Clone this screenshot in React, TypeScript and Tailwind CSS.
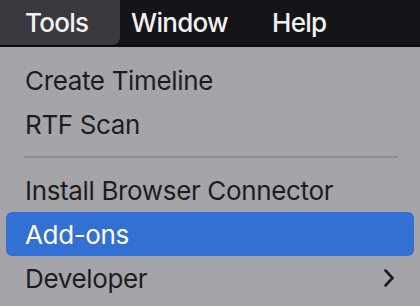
const MENU_ITEMS = [
  { label: "Create Timeline" },
  { label: "RTF Scan" },
  { separator: true },
  { label: "Install Browser Connector" },
  { label: "Add-ons", active: true },
  { label: "Developer", submenu: true },
];

const App = () => {
  return (
    <div className="h-[306px] w-[420px] overflow-hidden bg-[#a5a5a9] font-['Inter',sans-serif]">
      {/* menu bar */}
      <div className="flex h-[45px] items-stretch bg-[#151519] text-[26px] font-medium tracking-[-0.7px] text-[#f2f2f2]">
        <div className="flex w-[120px] items-center rounded-br-[8px] bg-[#3a3a3e] pl-[25px]">
          Tools
        </div>
        <div className="ml-[11px] flex items-center">Window</div>
        <div className="ml-[44px] flex items-center">Help</div>
      </div>
      <div className="h-[2px] bg-[#0c0c0e]" />

      {/* dropdown */}
      <div className="pt-[11px] text-[26px] tracking-[-0.35px] text-[#1d1d1f]">
        {MENU_ITEMS.map((item, i) =>
          item.separator ? (
            <div key={i} className="flex h-[22px] items-center pl-[24px] pr-[22px]">
              <div className="h-[2px] w-full bg-[#8e8e92]" />
            </div>
          ) : (
            <div
              key={i}
              className={
                item.active
                  ? "mx-[6px] flex h-[44px] items-center justify-between rounded-[6px] bg-[#3370d4] pl-[19px] pr-[19px] text-white"
                  : "mx-[6px] flex h-[44px] items-center justify-between pl-[19px] pr-[19px]"
              }
            >
              <span>{item.label}</span>
              {item.submenu && (
                <svg width="12" height="20" viewBox="0 0 12 20" fill="none">
                  <polyline
                    points="2.5,2.5 9.5,10 2.5,17.5"
                    stroke="#1d1d1f"
                    strokeWidth="2.6"
                    strokeLinecap="round"
                    strokeLinejoin="round"
                  />
                </svg>
              )}
            </div>
          )
        )}
      </div>
    </div>
  );
};

export default App;
